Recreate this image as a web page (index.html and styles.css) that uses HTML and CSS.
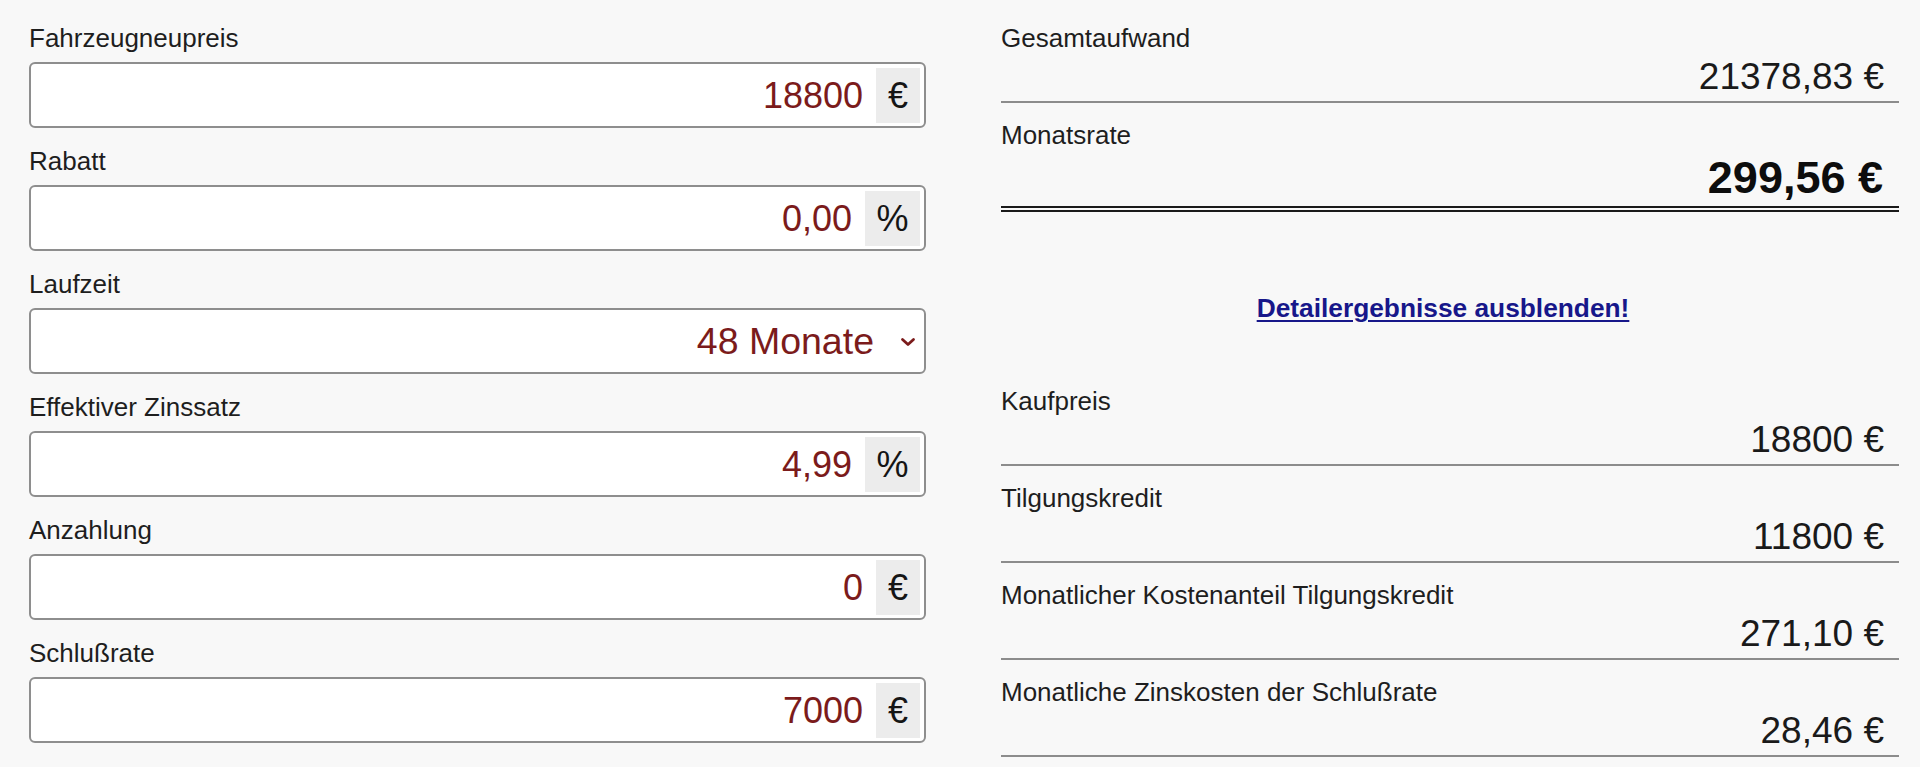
FILE: index.html
```html
<!DOCTYPE html>
<html lang="de">
<head>
<meta charset="utf-8">
<title>Finanzierungsrechner</title>
<link rel="stylesheet" href="styles.css">
</head>
<body>
<div class="page">
  <div class="inputs">
    <div class="group">
      <label class="label">Fahrzeugneupreis</label>
      <div class="field"><span class="val">18800</span><span class="addon">€</span></div>
    </div>
    <div class="group">
      <label class="label">Rabatt</label>
      <div class="field"><span class="val">0,00</span><span class="addon addon-pct">%</span></div>
    </div>
    <div class="group">
      <label class="label">Laufzeit</label>
      <div class="field field-select"><span class="val val-select">48 Monate</span>
        <svg class="chev" width="16" height="10" viewBox="0 0 16 10"><path d="M2.5 2.5 L8 7.5 L13.5 2.5" fill="none" stroke="#7b1b1b" stroke-width="2.8" stroke-linecap="round" stroke-linejoin="round"/></svg>
      </div>
    </div>
    <div class="group">
      <label class="label">Effektiver Zinssatz</label>
      <div class="field"><span class="val">4,99</span><span class="addon addon-pct">%</span></div>
    </div>
    <div class="group">
      <label class="label">Anzahlung</label>
      <div class="field"><span class="val">0</span><span class="addon">€</span></div>
    </div>
    <div class="group">
      <label class="label">Schlußrate</label>
      <div class="field"><span class="val">7000</span><span class="addon">€</span></div>
    </div>
  </div>
  <div class="results">
    <div class="row">
      <div class="rlabel">Gesamtaufwand</div>
      <div class="rval">21378,83 €</div>
    </div>
    <div class="row row-main">
      <div class="rlabel">Monatsrate</div>
      <div class="rval rval-main">299,56 €</div>
    </div>
    <div class="linkwrap"><a class="toggle" href="#">Detailergebnisse ausblenden!</a></div>
    <div class="row">
      <div class="rlabel">Kaufpreis</div>
      <div class="rval">18800 €</div>
    </div>
    <div class="row">
      <div class="rlabel">Tilgungskredit</div>
      <div class="rval">11800 €</div>
    </div>
    <div class="row">
      <div class="rlabel">Monatlicher Kostenanteil Tilgungskredit</div>
      <div class="rval">271,10 €</div>
    </div>
    <div class="row">
      <div class="rlabel">Monatliche Zinskosten der Schlußrate</div>
      <div class="rval">28,46 €</div>
    </div>
  </div>
</div>
</body>
</html>
```

FILE: styles.css
```css
html, body {
  margin: 0;
  padding: 0;
  background: #f8f8f8;
}
body {
  font-family: "Liberation Sans", Arial, sans-serif;
  color: #1e1e1e;
  width: 1920px;
  height: 767px;
  overflow: hidden;
}
.page {
  display: flex;
  padding-left: 29px;
  gap: 75px;
}
.inputs {
  width: 897px;
  padding-top: 23px;
  display: flex;
  flex-direction: column;
}
.group {
  display: flex;
  flex-direction: column;
  margin-bottom: 18px;
}
.label {
  font-size: 26px;
  line-height: 30px;
  margin-bottom: 9px;
  color: #1e1e1e;
}
.field {
  box-sizing: border-box;
  height: 66px;
  border: 2px solid #8e8e8e;
  border-radius: 6px;
  background: #fff;
  display: flex;
  align-items: stretch;
  padding: 4px 4px 3px 4px;
}
.val {
  flex: 1;
  text-align: right;
  font-size: 36px;
  line-height: 55px;
  color: #7b1b1b;
  padding-right: 13px;
}
.addon {
  background: #ececec;
  width: 44px;
  display: flex;
  align-items: center;
  justify-content: center;
  font-size: 36px;
  color: #151515;
}
.addon-pct {
  width: 55px;
}
.field-select {
  align-items: center;
}
.val-select {
  font-size: 37.5px;
  padding-right: 0;
}
.chev {
  margin-left: 26px;
  margin-right: 4px;
  display: block;
}
.results {
  width: 898px;
  padding-top: 6px;
}
.row {
  padding: 17px 0 4px 0;
  border-bottom: 2px solid #8c8c8c;
}
.rlabel {
  font-size: 26px;
  line-height: 30px;
  margin-bottom: 4px;
  color: #1e1e1e;
}
.rval {
  font-size: 37px;
  line-height: 40px;
  text-align: right;
  padding-right: 15px;
  color: #1a1a1a;
}
.row-main {
  padding-bottom: 4px;
  border-bottom: 6px double #1a1a1a;
}
.rval-main {
  font-size: 45px;
  line-height: 48px;
  font-weight: bold;
  padding-right: 16px;
  color: #0d0d0d;
}
.linkwrap {
  text-align: center;
  padding: 81px 14px 42px 0;
  line-height: 30px;
}
.toggle {
  font-size: 26.3px;
  font-weight: bold;
  color: #17178a;
  text-decoration: underline;
  text-decoration-thickness: 2px;
  text-underline-offset: 3px;
}
```
